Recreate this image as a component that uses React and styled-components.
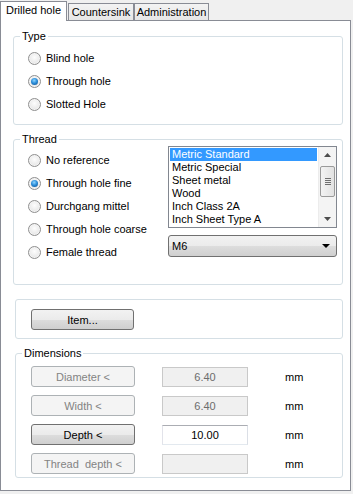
import React from "react";
import styled, { createGlobalStyle, css } from "styled-components";

const GlobalStyle = createGlobalStyle`
  html, body {
    margin: 0;
    padding: 0;
    background: #f0f0f0;
  }
  body {
    font-family: "Liberation Sans", Arial, sans-serif;
    font-size: 11px;
    color: #000;
  }
`;

const Window = styled.div`
  width: 353px;
  height: 494px;
  background: #f0f0f0;
  overflow: hidden;
`;

const TabStrip = styled.div`
  display: flex;
  align-items: flex-end;
  height: 20px;
  box-sizing: border-box;
  padding-top: 1px;
`;

const Tab = styled.div`
  box-sizing: border-box;
  display: flex;
  align-items: center;
  justify-content: center;
  border: 1px solid #898c95;
  border-bottom: none;
  line-height: 13px;
  ${props => props.active ? css`
    height: 20px;
    width: 67px;
    margin-bottom: -1px;
    background: #fff;
    position: relative;
    z-index: 1;
    padding-bottom: 2px;
  ` : css`
    height: 17px;
    width: ${props.width}px;
    margin-left: ${props.gap}px;
    background: linear-gradient(#f3f3f3, #e6e6e6);
    padding-top: 1px;
  `}
`;

const Panel = styled.div`
  box-sizing: border-box;
  width: 351px;
  height: 471px;
  background: #fff;
  border: 1px solid #898c95;
  padding: 9px 7px 0 12px;
  display: flex;
  flex-direction: column;
`;

const Group = styled.fieldset`
  box-sizing: border-box;
  margin: ${props => props.top || 0}px 0 0 ${props => props.indent || 0}px;
  padding: 0;
  min-width: 0;
  border: 1px solid #d5dfe5;
  border-radius: 3px;
  height: ${props => props.h}px;
`;

const Legend = styled.legend`
  margin-left: 6px;
  padding: 0 2px;
  line-height: 13px;
  height: 13px;
`;

const RadioList = styled.div`
  display: flex;
  flex-direction: column;
  padding: ${props => props.pt}px 0 0 14px;
`;

const RadioRow = styled.label`
  display: flex;
  align-items: center;
  gap: 5px;
  height: 23px;
  line-height: 13px;
`;

const RadioDot = styled.span`
  box-sizing: border-box;
  width: 13px;
  height: 13px;
  border-radius: 50%;
  border: 1px solid #8f8f8f;
  background: radial-gradient(circle at 50% 40%, #fdfdfd 0%, #ececec 55%, #d8d8d8 100%);
  box-shadow: inset 0 0 0 1px #f4f4f4;
  display: flex;
  align-items: center;
  justify-content: center;
  flex: none;

  &::after {
    content: '';
    display: ${props => props.checked ? 'block' : 'none'};
    width: 7px;
    height: 7px;
    border-radius: 50%;
    background: radial-gradient(circle at 45% 35%, #8fd6ff 0%, #2d8fdb 45%, #0a4b8a 100%);
  }
`;

const ThreadBody = styled.div`
  display: flex;
  justify-content: space-between;
  padding-right: 5px;
`;

const RightColumn = styled.div`
  display: flex;
  flex-direction: column;
  gap: 7px;
  width: 169px;
`;

const ListBox = styled.div`
  box-sizing: border-box;
  height: 82px;
  border: 1px solid #828790;
  display: flex;
  background: #fff;
`;

const ListItems = styled.div`
  flex: 1;
  padding: 1px 1px 0 1px;
  overflow: hidden;
`;

const ListItem = styled.div`
  height: 13px;
  line-height: 13px;
  padding-left: 2px;
  white-space: nowrap;
  ${props => props.selected && css`
    background: #3399ff;
    color: #fff;
  `}
`;

const ScrollBar = styled.div`
  width: 17px;
  background: #f4f4f4;
  border-left: 1px solid #ececec;
  display: flex;
  flex-direction: column;
  align-items: center;
`;

const ScrollArrow = styled.div`
  height: 16px;
  display: flex;
  align-items: center;
  justify-content: center;
`;

const ScrollThumb = styled.div`
  box-sizing: border-box;
  width: 15px;
  height: 31px;
  margin-top: 3px;
  border: 1px solid #9a9a9a;
  border-radius: 2px;
  background: linear-gradient(to right, #f3f3f3, #e2e2e2);
  display: flex;
  flex-direction: column;
  align-items: center;
  justify-content: center;
  gap: 1px;
  flex: none;
`;

const Grip = styled.span`
  width: 6px;
  height: 1px;
  background: #6f6f6f;
`;

const ScrollSpacer = styled.div`
  flex: 1;
`;

const Combo = styled.div`
  box-sizing: border-box;
  height: 22px;
  border: 1px solid #707070;
  border-radius: 3px;
  background: linear-gradient(#f2f2f2 0%, #ebebeb 50%, #dddddd 51%, #cfcfcf 100%);
  display: flex;
  align-items: center;
  justify-content: space-between;
  padding: 0 6px 0 3px;
`;

const ItemRow = styled.div`
  padding: 9px 0 0 15px;
`;

const Button = styled.div`
  box-sizing: border-box;
  width: ${props => props.w || 104}px;
  height: 21px;
  border-radius: 3px;
  display: flex;
  align-items: center;
  justify-content: center;
  white-space: pre;
  ${props => props.disabled ? css`
    border: 1px solid #adb2b5;
    background: #f4f4f4;
    color: #838383;
  ` : css`
    border: 1px solid #707070;
    background: linear-gradient(#f2f2f2 0%, #ebebeb 50%, #dddddd 51%, #cfcfcf 100%);
    color: #000;
  `}
`;

const DimRows = styled.div`
  display: flex;
  flex-direction: column;
  gap: 8px;
  padding: 6px 0 0 15px;
`;

const DimRow = styled.div`
  display: grid;
  grid-template-columns: 104px 86px 40px;
  column-gap: 27px;
  align-items: center;
  height: 21px;
`;

const Field = styled.div`
  box-sizing: border-box;
  height: 20px;
  display: flex;
  align-items: center;
  justify-content: center;
  ${props => props.disabled ? css`
    border: 1px solid #c9c9c9;
    background: #f0f0f0;
    color: #6d6d6d;
  ` : css`
    border: 1px solid #abadb3;
    border-color: #abadb3 #dbdfe6 #e3e9ef #e2e3ea;
    background: #fff;
  `}
`;

const Unit = styled.span`
  padding-left: 10px;
`;

const UpArrow = () => (
  <svg width="7" height="4" viewBox="0 0 7 4"><path d="M3.5 0 L7 4 L0 4 Z" fill="#4d4d4d" /></svg>
);
const DownArrow = ({ color = "#4d4d4d", w = 7, h = 4 }) => (
  <svg width={w} height={h} viewBox={`0 0 ${w} ${h}`}><path d={`M0 0 L${w} 0 L${w / 2} ${h} Z`} fill={color} /></svg>
);

const typeOptions = ["Blind hole", "Through hole", "Slotted Hole"];
const threadOptions = ["No reference", "Through hole fine", "Durchgang mittel", "Through hole coarse", "Female thread"];
const standards = ["Metric Standard", "Metric Special", "Sheet metal", "Wood", "Inch Class 2A", "Inch Sheet Type A"];

const dims = [
  { label: "Diameter <", value: "6.40", disabled: true },
  { label: "Width <", value: "6.40", disabled: true },
  { label: "Depth <", value: "10.00", disabled: false },
  { label: "Thread  depth <", value: "", disabled: true },
];

export default function App() {
  return (
    <Window>
      <GlobalStyle />
      <TabStrip>
        <Tab active>Drilled hole</Tab>
        <Tab width={66} gap={1}>Countersink</Tab>
        <Tab width={75} gap={0}>Administration</Tab>
      </TabStrip>
      <Panel>
        <Group h={95}>
          <Legend>Type</Legend>
          <RadioList pt={4}>
            {typeOptions.map((o, i) => (
              <RadioRow key={o}>
                <RadioDot checked={i === 1} />
                {o}
              </RadioRow>
            ))}
          </RadioList>
        </Group>

        <Group h={152} top={8}>
          <Legend>Thread</Legend>
          <ThreadBody>
            <RadioList pt={3}>
              {threadOptions.map((o, i) => (
                <RadioRow key={o}>
                  <RadioDot checked={i === 1} />
                  {o}
                </RadioRow>
              ))}
            </RadioList>
            <RightColumn>
              <ListBox>
                <ListItems>
                  {standards.map((s, i) => (
                    <ListItem key={s} selected={i === 0}>{s}</ListItem>
                  ))}
                </ListItems>
                <ScrollBar>
                  <ScrollArrow><UpArrow /></ScrollArrow>
                  <ScrollThumb>
                    <Grip /><Grip /><Grip /><Grip />
                  </ScrollThumb>
                  <ScrollSpacer />
                  <ScrollArrow><DownArrow /></ScrollArrow>
                </ScrollBar>
              </ListBox>
              <Combo>
                <span>M6</span>
                <DownArrow color="#000" w={8} h={4} />
              </Combo>
            </RightColumn>
          </ThreadBody>
        </Group>

        <Group h={40} top={14} indent={2}>
          <ItemRow>
            <Button w={103}>Item...</Button>
          </ItemRow>
        </Group>

        <Group h={131} top={8} indent={2}>
          <Legend>Dimensions</Legend>
          <DimRows>
            {dims.map(d => (
              <DimRow key={d.label}>
                <Button disabled={d.disabled}>{d.label}</Button>
                <Field disabled={d.disabled}>{d.value}</Field>
                <Unit>mm</Unit>
              </DimRow>
            ))}
          </DimRows>
        </Group>
      </Panel>
    </Window>
  );
}
